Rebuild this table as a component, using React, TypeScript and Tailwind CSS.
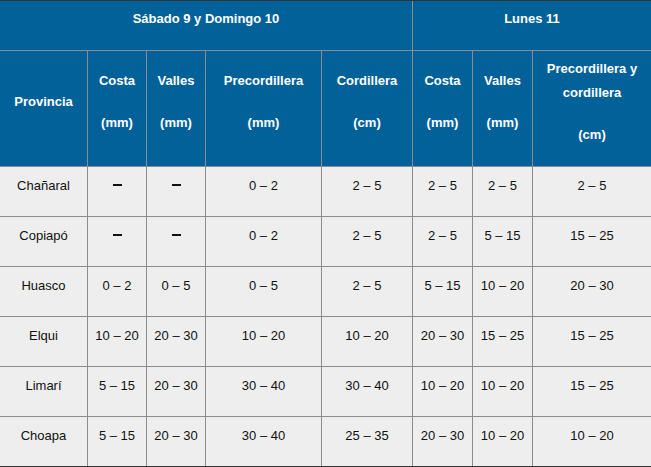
const cols = 'grid-cols-[87px_58px_58px_115px_90px_59px_59px_118px]';

type Row = { provincia: string; vals: string[] };

const rows: Row[] = [
  { provincia: 'Chañaral', vals: ['-', '-', '0 – 2', '2 – 5', '2 – 5', '2 – 5', '2 – 5'] },
  { provincia: 'Copiapó', vals: ['-', '-', '0 – 2', '2 – 5', '2 – 5', '5 – 15', '15 – 25'] },
  { provincia: 'Huasco', vals: ['0 – 2', '0 – 5', '0 – 5', '2 – 5', '5 – 15', '10 – 20', '20 – 30'] },
  { provincia: 'Elqui', vals: ['10 – 20', '20 – 30', '10 – 20', '10 – 20', '20 – 30', '15 – 25', '15 – 25'] },
  { provincia: 'Limarí', vals: ['5 – 15', '20 – 30', '30 – 40', '30 – 40', '10 – 20', '10 – 20', '15 – 25'] },
  { provincia: 'Choapa', vals: ['5 – 15', '20 – 30', '30 – 40', '25 – 35', '20 – 30', '10 – 20', '10 – 20'] },
];

const subHeaders: { title: string; unit: string }[] = [
  { title: 'Costa', unit: '(mm)' },
  { title: 'Valles', unit: '(mm)' },
  { title: 'Precordillera', unit: '(mm)' },
  { title: 'Cordillera', unit: '(cm)' },
  { title: 'Costa', unit: '(mm)' },
  { title: 'Valles', unit: '(mm)' },
  { title: 'Precordillera y cordillera', unit: '(cm)' },
];

function HeadCell({ title, unit }: { title: string; unit: string }) {
  return (
    <div className="bg-[#03619a] h-[115px] flex flex-col items-center justify-center pb-[13px] px-1 text-center">
      <p className="leading-[24px]">{title}</p>
      <p className="leading-[24px] mt-[18px]">{unit}</p>
    </div>
  );
}

function BodyCell({ value }: { value: string }) {
  return (
    <div className="bg-[#eeeeee] h-[49px] flex items-center justify-center pb-[12px]">
      {value === '-' ? (
        <span className="block w-[9px] h-[2px] bg-[#111] -mt-[1px]" />
      ) : (
        <span>{value}</span>
      )}
    </div>
  );
}

export default function App() {
  return (
    <div className="w-[651px] h-[467px] bg-white font-['Liberation_Sans',Arial,sans-serif]">
      <div
        className={`grid ${cols} gap-px bg-[#8c8c8c] border-t border-b border-[#333333]`}
      >
        {/* Fila de días */}
        <div className="col-span-5 bg-[#03619a] h-[49px] flex justify-center pt-[6px] text-white font-bold text-[13px] leading-[24px]">
          Sábado 9 y Domingo 10
        </div>
        <div className="col-span-3 bg-[#03619a] h-[49px] flex justify-center pt-[6px] text-white font-bold text-[13px] leading-[24px]">
          Lunes 11
        </div>

        {/* Encabezados */}
        <div className="bg-[#03619a] h-[115px] flex items-center justify-center pb-[13px] text-white font-bold text-[13px]">
          Provincia
        </div>
        {subHeaders.map((h, i) => (
          <div key={i} className="text-white font-bold text-[13px]">
            <HeadCell title={h.title} unit={h.unit} />
          </div>
        ))}

        {/* Datos */}
        {rows.map((r) => (
          <div key={r.provincia} className="contents text-[13px] text-[#111]">
            <BodyCell value={r.provincia} />
            {r.vals.map((v, i) => (
              <BodyCell key={i} value={v} />
            ))}
          </div>
        ))}
      </div>
    </div>
  );
}
